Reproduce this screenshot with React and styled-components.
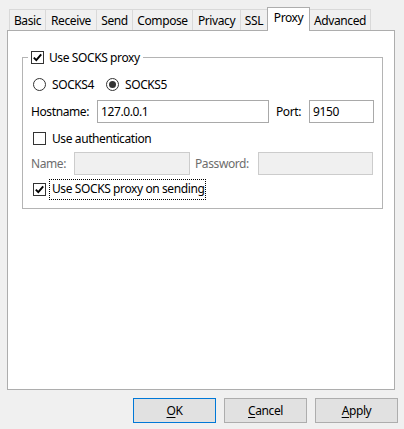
import React from "react";
import styled, { createGlobalStyle, css } from "styled-components";

const Global = createGlobalStyle`
  html, body { margin: 0; padding: 0; background: #f0f0f0; }
  * { box-sizing: border-box; }
`;

const Window = styled.div`
  width: 404px;
  height: 429px;
  background: #f0f0f0;
  font-family: "Noto Sans", "Liberation Sans", sans-serif;
  font-size: 12px;
  letter-spacing: -0.4px;
  color: #000;
  display: flex;
  flex-direction: column;
  overflow: hidden;
`;

const TabRow = styled.div`
  height: 30px;
  padding-left: 9px;
  display: flex;
  align-items: flex-end;
`;

const Tab = styled.div`
  width: ${(p) => p.$width}px;
  height: 21px;
  margin-left: -1px;
  border: 1px solid #d9d9d9;
  border-bottom: none;
  background: #f0f0f0;
  display: flex;
  align-items: center;
  justify-content: center;
  padding-top: 1px;
  white-space: nowrap;
  ${(p) =>
    p.$active &&
    css`
      height: 24px;
      margin-bottom: -1px;
      background: #fff;
      border-color: #adadad;
      position: relative;
      z-index: 1;
      padding-top: 0;
      padding-bottom: 4px;
    `}
  &:first-child { margin-left: 0; }
`;

const Panel = styled.div`
  margin-left: 7px;
  width: 388px;
  height: 360px;
  background: #fff;
  border: 1px solid #adadad;
  padding: 26px 0 0 14px;
`;

const Group = styled.div`
  position: relative;
  width: 361px;
  height: 152px;
  border: 1px solid #b4b4b4;
  padding-left: 8px;
  display: flex;
  flex-direction: column;
`;

const Legend = styled.div`
  position: absolute;
  top: -8px;
  left: 5px;
  height: 15px;
  padding: 0 3px;
  background: #fff;
  display: flex;
  align-items: center;
  gap: 5px;
`;

const Row = styled.div`
  display: flex;
  align-items: center;
  margin-top: ${(p) => p.$top}px;
  padding-left: ${(p) => p.$indent || 0}px;
  height: ${(p) => p.$height}px;
`;

const Box = styled.span`
  width: 13px;
  height: 13px;
  border: 1px solid #333;
  background: #fff;
  display: inline-flex;
  align-items: center;
  justify-content: center;
  flex: none;
`;

const RadioCircle = styled.span`
  width: 13px;
  height: 13px;
  border: 1px solid #333;
  border-radius: 50%;
  background: #fff;
  display: inline-flex;
  align-items: center;
  justify-content: center;
  flex: none;
  &::after {
    content: "";
    display: ${(p) => (p.$checked ? "block" : "none")};
    width: 7px;
    height: 7px;
    border-radius: 50%;
    background: #333;
  }
`;

const Option = styled.label`
  display: flex;
  align-items: center;
  gap: 6px;
  width: ${(p) => (p.$width ? `${p.$width}px` : "auto")};
  white-space: nowrap;
`;

const FocusText = styled.span`
  outline: 1px dotted #000;
  outline-offset: 0;
  padding: 1px 1px 2px 2px;
  margin-left: -2px;
  line-height: 16px;
`;

const Label = styled.span`
  width: ${(p) => p.$width}px;
  flex: none;
  white-space: nowrap;
  color: ${(p) => (p.$disabled ? "#6d6d6d" : "#000")};
`;

const Input = styled.div`
  width: ${(p) => p.$width}px;
  height: 23px;
  flex: none;
  border: 1px solid ${(p) => (p.$disabled ? "#cccccc" : "#a9a9a9")};
  background: ${(p) => (p.$disabled ? "#f0f0f0" : "#fff")};
  padding-left: 3px;
  display: flex;
  align-items: center;
  margin-right: ${(p) => p.$gap || 0}px;
`;

const ButtonRow = styled.div`
  margin-top: 8px;
  padding-right: 6px;
  display: flex;
  justify-content: flex-end;
  gap: 8px;
`;

const Button = styled.div`
  width: 83px;
  height: 25px;
  border: 1px solid ${(p) => (p.$default ? "#0078d7" : "#adadad")};
  background: #e1e1e1;
  display: flex;
  align-items: center;
  justify-content: center;
  u { text-decoration: underline; text-underline-offset: 2px; }
`;

const Check = () => (
  <svg width="11" height="11" viewBox="0 0 11 11">
    <path d="M1.8 5.6 L4.3 8.2 L9.2 2.3" fill="none" stroke="#000" strokeWidth="1.9" />
  </svg>
);

const tabs = [
  ["Basic", 37],
  ["Receive", 52],
  ["Send", 37],
  ["Compose", 61],
  ["Privacy", 49],
  ["SSL", 28],
  ["Proxy", 43, true],
  ["Advanced", 62],
];

export default function App() {
  return (
    <Window>
      <Global />
      <TabRow>
        {tabs.map(([t, w, a]) => (
          <Tab key={t} $width={w} $active={a}>
            {t}
          </Tab>
        ))}
      </TabRow>
      <Panel>
        <Group>
          <Legend>
            <Box>
              <Check />
            </Box>
            <span>Use SOCKS proxy</span>
          </Legend>
          <Row $top={19} $height={15} $indent={2}>
            <Option $width={73}>
              <RadioCircle />
              SOCKS4
            </Option>
            <Option>
              <RadioCircle $checked />
              SOCKS5
            </Option>
          </Row>
          <Row $top={8} $height={23}>
            <Label $width={66}>Hostname:</Label>
            <Input $width={172} $gap={7}>127.0.0.1</Input>
            <Label $width={33}>Port:</Label>
            <Input $width={65}>9150</Input>
          </Row>
          <Row $top={8} $height={15} $indent={2}>
            <Option>
              <Box />
              Use authentication
            </Option>
          </Row>
          <Row $top={6} $height={23}>
            <Label $width={43} $disabled>Name:</Label>
            <Input $width={116} $gap={5} $disabled />
            <Label $width={63} $disabled>Password:</Label>
            <Input $width={115} $disabled />
          </Row>
          <Row $top={4} $height={20} $indent={2}>
            <Option>
              <Box>
                <Check />
              </Box>
              <FocusText>Use SOCKS proxy on sending</FocusText>
            </Option>
          </Row>
        </Group>
      </Panel>
      <ButtonRow>
        <Button $default>
          <span><u>O</u>K</span>
        </Button>
        <Button>
          <span><u>C</u>ancel</span>
        </Button>
        <Button>
          <span><u>A</u>pply</span>
        </Button>
      </ButtonRow>
    </Window>
  );
}
